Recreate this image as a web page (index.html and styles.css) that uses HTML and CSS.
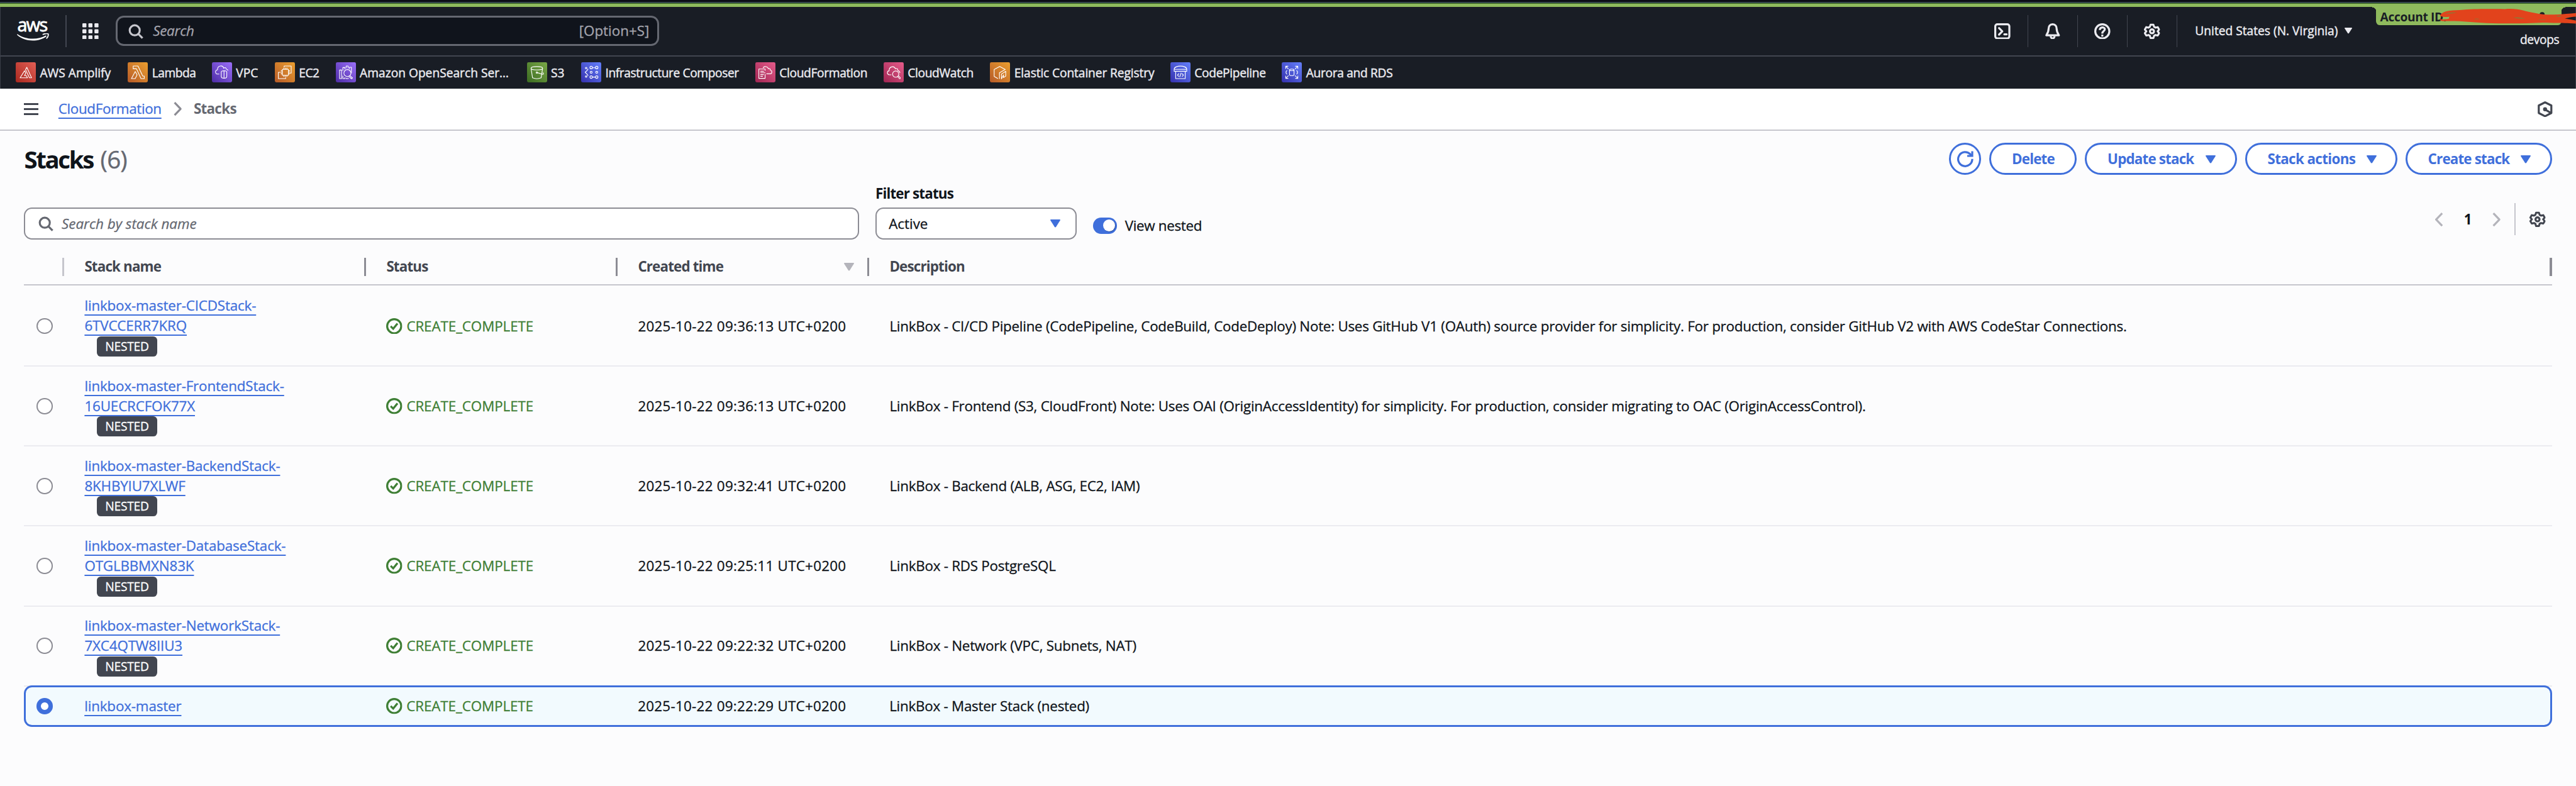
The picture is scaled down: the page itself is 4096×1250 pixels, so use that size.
FILE: index.html
```
<!DOCTYPE html>
<html lang="en">
<head>
<meta charset="utf-8">
<title>CloudFormation - Stacks</title>
<link rel="stylesheet" href="styles.css">
</head>
<body>
<svg class="defs" aria-hidden="true">
  <defs>
    <symbol id="i-search" viewBox="0 0 32 32"><circle cx="14" cy="14" r="10" fill="none" stroke="currentColor" stroke-width="4"/><path d="M21 21l8.500 8.500" fill="none" stroke="currentColor" stroke-width="4"/></symbol>
    <symbol id="i-caret" viewBox="0 0 20 16"><path d="M1.200 0H18.800Q20.500 0.300 19.600 2L11.300 15Q10 16.800 8.700 15L.4 2Q-.5 .3 1.200 0Z" fill="currentColor"/></symbol>
    <symbol id="i-gear" viewBox="0 0 32 32"><path d="M13 2h6l1.400 4.600 3 1.700 4.600-1.100 3 5-3.200 3.800 3.200 3.800-3 5-4.600-1.100-3 1.700L19 30h-6l-1.400-4.600-3-1.700L4 24.800l-3-5L4.200 16 1 12.200l3-5 4.600 1.100 3-1.700z" transform="translate(.8 .8) scale(.95)" fill="none" stroke="currentColor" stroke-width="4" stroke-linejoin="round"/><circle cx="16" cy="16" r="4" fill="none" stroke="currentColor" stroke-width="4"/></symbol>
    <symbol id="i-check" viewBox="0 0 32 32"><circle cx="16" cy="16" r="14" fill="none" stroke="currentColor" stroke-width="4"/><path d="M9 16l5 5 8.500-10.500" fill="none" stroke="currentColor" stroke-width="4"/></symbol>
    <symbol id="i-chevron" viewBox="0 0 16 28"><path d="M2 1.500L14 14 2 26.500" fill="none" stroke="currentColor" stroke-width="4" stroke-linejoin="round"/></symbol>
  </defs>
</svg>

<div class="account-stripe"></div>
<header class="topnav">
  <a class="aws">
    <span class="aws-word">aws</span>
    <svg class="aws-smile" viewBox="0 0 64 15"><path d="M1 1.500C16 13 42 13.500 57 4.500Q59.500 4.500 58 6.500C42 18 15 17 .5 3.500Q-.3 1.500 1 1.500Z" fill="#fff"/><path d="M51 2.500Q58 -.8 62 1.200Q63.500 5 58.500 10.500" fill="none" stroke="#fff" stroke-width="2.200"/></svg>
  </a>
  <span class="nav-divider"></span>
  <svg class="apps" viewBox="0 0 32 32" fill="#ebebf0"><rect width="8" height="8" rx="1.500"/><rect x="12" width="8" height="8" rx="1.500"/><rect x="24" width="8" height="8" rx="1.500"/><rect y="12" width="8" height="8" rx="1.500"/><rect x="12" y="12" width="8" height="8" rx="1.500"/><rect x="24" y="12" width="8" height="8" rx="1.500"/><rect y="24" width="8" height="8" rx="1.500"/><rect x="12" y="24" width="8" height="8" rx="1.500"/><rect x="24" y="24" width="8" height="8" rx="1.500"/></svg>
  <div class="nav-search"><svg class="icon"><use href="#i-search"/></svg><span class="nav-search-text">Search</span><span class="nav-search-key">[Option+S]</span></div>
  <div class="nav-tools">
    <span class="tool"><svg class="icon" viewBox="0 0 32 32" fill="none" stroke="currentColor" stroke-width="4"><rect x="2" y="2" width="28" height="28" rx="4"/><path d="M9.500 9.500L16 16l-6.500 6.500" stroke-linejoin="round" stroke-linecap="round"/><path d="M20 22h4.500" stroke-linecap="round"/></svg></span>
    <span class="tool"><svg class="icon" viewBox="0 0 32 32" fill="none" stroke="currentColor" stroke-width="4" stroke-linejoin="round"><path d="M16 2C10.500 2 8 6 8 11C8 17 6 20 3.500 24H28.500C26 20 24 17 24 11C24 6 21.500 2 16 2Z"/><path d="M12 25.500Q12.500 30 16 30T20 25.500"/></svg></span>
    <span class="tool"><svg class="icon" viewBox="0 0 32 32" fill="none" stroke="currentColor" stroke-width="4"><circle cx="16" cy="16" r="14"/><path d="M11 13.500C11 6.500 21 6.800 21 12C21 15.500 16 15.500 16 20.500"/><path d="M16 22.500v4"/></svg></span>
    <span class="tool"><svg class="icon"><use href="#i-gear"/></svg></span>
  </div>
  <span class="region">United States (N. Virginia)<svg class="region-caret" viewBox="0 0 20 16"><use href="#i-caret"/></svg></span>
  <div class="account"><span class="account-tab">Account ID:</span><span class="account-user">devops</span></div>
  <svg class="scribble" viewBox="0 0 272 37">
    <g fill="#191d25"><path d="M105 9h9v6h-9zM124 9h8v3h-8zM136 9h9v6h-9zM176 11h10v6h-10zM90 22h20v3H90z"/><circle cx="204" cy="14" r="5"/></g>
    <path d="M1 16C6 6 20 6 40 5C75 2 100 3 130 3C160 1 168 8 190 11C215 17 245 13 272 11V18C264 18 256 20 249 22Q262 24 272 26V32C240 30 225 31 205 30C170 32 130 32 95 31C60 29 45 26 5 27Q-1 26 2 23Q15 24 19 22Q18 18 21 18Q4 20 1 16Z" fill="#e2431c"/>
    <path d="M10 12q12-3 25-2q-12 3-25 2zM68 23q6-2 12 0zM146 20q12-2 24 2q-14 1-24-2zM197 24h14v1h-14zM231 17q8-2 13 0q-8 2-13 0z" fill="#8a7a35"/>
  </svg>
</header>

<nav class="favorites">
  <a class="fav fav-amplify"><svg class="fav-icon red" viewBox="0 0 40 40"><path d="M22 10L31.500 31H27.300L19.500 14.800ZM8.700 31L17.500 17 20 21.500 17.500 26.500H21L23.500 31Z"/></svg><span>AWS Amplify</span></a>
  <a class="fav fav-lambda"><svg class="fav-icon orange" viewBox="0 0 40 40"><path d="M11 7.500h9.500L30 27.500h3v5h-6.500L17.500 13h-6.500ZM7.500 32.500L15 18.500l3.700 6.500-3.700 7.500Z"/></svg><span>Lambda</span></a>
  <a class="fav fav-vpc"><svg class="fav-icon purple" viewBox="0 0 40 40"><path d="M14.500 23.500H12C6 23.500 5.500 16 11 15C11 6 21.500 5 23.500 12Q27 8.500 28.500 13.500Q31 14 32 16.500M18.500 19.500C18.500 16 29.500 16 29.500 19.500V28C29.500 33 18.500 33 18.500 28ZM24 17.500V31.500"/></svg><span>VPC</span></a>
  <a class="fav fav-ec2"><svg class="fav-icon orange" viewBox="0 0 40 40"><path d="M15 14h12v12H15zM18 11v3M21 11v3M24 11v3M18 26v3M21 26v3M24 26v3M12 17h3M12 20h3M12 23h3M27 17h3M27 20h3M27 23h3M18.500 10V7.500h14v14H30M11.500 20H7v12.500h14.500V30"/></svg><span>EC2</span></a>
  <a class="fav fav-opensearch"><svg class="fav-icon purple" viewBox="0 0 40 40"><path d="M7.500 15.500h4v17h-4zM14 17v-6.500h4V14M20.500 12V7.500h4V12M27 13v-3h4v12M14 27v5.500h4V30M20.500 31v1.500h4V31M29 31v1.500"/><circle cx="23" cy="21.500" r="7"/><path d="M27.500 26.500l5.500 4.500-1.500 2-6-5"/></svg><span>Amazon OpenSearch Ser…</span></a>
  <a class="fav fav-s3"><svg class="fav-icon green" viewBox="0 0 40 40"><path d="M8 12C8 7.500 31 7.500 31 12S8 16.500 8 12L11 31Q19.500 34.500 28 31L31 12M20 20.500L31 24q3-.5 .5-3.500"/><circle cx="19.500" cy="20.500" r="1.300"/></svg><span>S3</span></a>
  <a class="fav fav-composer"><svg class="fav-icon blue" viewBox="0 0 40 40"><circle cx="10" cy="11.500" r="1.500"/><circle cx="20" cy="10.500" r="2.500"/><circle cx="31" cy="10.500" r="2.500"/><circle cx="20" cy="20" r="2"/><circle cx="31" cy="20" r="2"/><circle cx="20" cy="29.500" r="2.500"/><circle cx="31" cy="29.500" r="2.500"/><circle cx="10" cy="28.500" r="1.500"/><path d="M22.500 11l6 0M22.500 29.500h6M14 13q-2 4-6 7q4 3 6 7"/></svg><span>Infrastructure Composer</span></a>
  <a class="fav fav-cfn"><svg class="fav-icon pink" viewBox="0 0 40 40"><path d="M19.500 17V13.500H7V32h12.500V23.500M10 18h7M10 21h10M10 24.500h7M10 28h5M15.500 11.500C17 7 25 8 26 13Q29.500 11 30 16C34.500 17 33 23 30 23H22"/></svg><span>CloudFormation</span></a>
  <a class="fav fav-cw"><svg class="fav-icon pink" viewBox="0 0 40 40"><path d="M15.500 25H11.500C6 24 6.500 17.500 11 17C10.500 8 21 6.500 23.500 13Q28 11 28.500 16.500Q32 17.500 32.500 21"/><circle cx="24" cy="23.500" r="6.200"/><path d="M28 28.500l3.500 4q2 .5 1.500-2l-4-4"/></svg><span>CloudWatch</span></a>
  <a class="fav fav-ecr"><svg class="fav-icon orange" viewBox="0 0 40 40"><path d="M16 32.500L8.500 28V14.500L19.500 8.500L30.500 14.500L19 21V33M23 33V23.500L31.500 18V27.500L27 30.500V25Z"/></svg><span>Elastic Container Registry</span></a>
  <a class="fav fav-pipeline"><svg class="fav-icon blue" viewBox="0 0 40 40"><path d="M7.500 14C7.500 5.500 32.500 5.500 32.500 14ZM7.500 14v4h25v-4M10.500 18v14.500h19V18M17 22.500l-3 3 3 3M23 22.500l3 3-3 3M21.500 21l-3 8.500"/></svg><span>CodePipeline</span></a>
  <a class="fav fav-rds"><svg class="fav-icon blue" viewBox="0 0 40 40"><path d="M8 13V8h5M8 8l5.500 5.500M32 13V8h-5M32 8l-5.500 5.500M8 27v5h5M8 32l5.500-5.500M32 27v5h-5M32 32l-5.500-5.500M15.500 15C15.500 13 24.500 13 24.500 15V25C24.500 27 15.500 27 15.500 25ZM15.500 15C15.500 17 24.500 17 24.500 15M10.500 16q-4 4 0 8M29.500 16q4 4 0 8"/></svg><span>Aurora and RDS</span></a>
</nav>

<div class="crumbs">
  <span class="burger"><i></i><i></i><i></i></span>
  <a class="link">CloudFormation</a>
  <svg class="crumb-sep" viewBox="0 0 16 28"><use href="#i-chevron"/></svg>
  <span class="crumb-current">Stacks</span>
  <svg class="panel-toggle" viewBox="0 0 32 32" fill="none" stroke="currentColor" stroke-width="4" stroke-linejoin="round"><path d="M16 2.200L28.500 8.500V23.500L16 29.800L3.500 23.500V8.500Z"/><circle cx="16" cy="16" r="2.500" fill="currentColor" stroke-width="3"/><path d="M17 17l10 6"/></svg>
</div>

<main class="content">
  <div class="heading">
    <h1>Stacks <span class="count">(6)</span></h1>
    <div class="actions">
      <button class="btn btn-refresh"><svg class="refresh" viewBox="0 0 32 32" fill="none" stroke="currentColor" stroke-width="4"><path d="M30 16A14 14 0 1 1 26 6.500L29 10"/><path d="M30 .5V10H20"/></svg></button>
      <button class="btn btn-delete">Delete</button>
      <button class="btn btn-update">Update stack<svg class="caret" viewBox="0 0 20 16"><use href="#i-caret"/></svg></button>
      <button class="btn btn-actions">Stack actions<svg class="caret" viewBox="0 0 20 16"><use href="#i-caret"/></svg></button>
      <button class="btn btn-create">Create stack<svg class="caret" viewBox="0 0 20 16"><use href="#i-caret"/></svg></button>
    </div>
  </div>

  <div class="filters">
    <div class="filter-input"><svg class="icon"><use href="#i-search"/></svg><span>Search by stack name</span></div>
    <div class="filter-status">
      <label>Filter status</label>
      <div class="select">Active<svg class="caret" viewBox="0 0 20 16"><use href="#i-caret"/></svg></div>
    </div>
    <div class="nested"><span class="toggle"><i></i></span>View nested</div>
    <div class="pager">
      <svg class="chev chev-prev" viewBox="0 0 16 28"><use href="#i-chevron"/></svg>
      <b>1</b>
      <svg class="chev" viewBox="0 0 16 28"><use href="#i-chevron"/></svg>
      <span class="pager-divider"></span>
      <svg class="icon"><use href="#i-gear"/></svg>
    </div>
  </div>

  <div class="table">
    <div class="row head">
      <span class="th th-select"></span><span class="th">Stack name</span><span class="th">Status</span><span class="th">Created time<svg class="caret sort" viewBox="0 0 20 16"><use href="#i-caret"/></svg></span><span class="th th-last">Description</span>
    </div>
    <div class="row first">
      <span class="radio"></span>
      <div class="name"><a class="link">linkbox-master-CICDStack-<br>6TVCCERR7KRQ</a><span class="badge">NESTED</span></div>
      <span class="status"><svg class="icon"><use href="#i-check"/></svg>CREATE_COMPLETE</span>
      <span class="time">2025-10-22 09:36:13 UTC+0200</span>
      <span class="desc">LinkBox - CI/CD Pipeline (CodePipeline, CodeBuild, CodeDeploy) Note: Uses GitHub V1 (OAuth) source provider for simplicity. For production, consider GitHub V2 with AWS CodeStar Connections.</span>
    </div>
    <div class="row">
      <span class="radio"></span>
      <div class="name"><a class="link">linkbox-master-FrontendStack-<br>16UECRCFOK77X</a><span class="badge">NESTED</span></div>
      <span class="status"><svg class="icon"><use href="#i-check"/></svg>CREATE_COMPLETE</span>
      <span class="time">2025-10-22 09:36:13 UTC+0200</span>
      <span class="desc">LinkBox - Frontend (S3, CloudFront) Note: Uses OAI (OriginAccessIdentity) for simplicity. For production, consider migrating to OAC (OriginAccessControl).</span>
    </div>
    <div class="row">
      <span class="radio"></span>
      <div class="name"><a class="link">linkbox-master-BackendStack-<br>8KHBYIU7XLWF</a><span class="badge">NESTED</span></div>
      <span class="status"><svg class="icon"><use href="#i-check"/></svg>CREATE_COMPLETE</span>
      <span class="time">2025-10-22 09:32:41 UTC+0200</span>
      <span class="desc">LinkBox - Backend (ALB, ASG, EC2, IAM)</span>
    </div>
    <div class="row">
      <span class="radio"></span>
      <div class="name"><a class="link">linkbox-master-DatabaseStack-<br>OTGLBBMXN83K</a><span class="badge">NESTED</span></div>
      <span class="status"><svg class="icon"><use href="#i-check"/></svg>CREATE_COMPLETE</span>
      <span class="time">2025-10-22 09:25:11 UTC+0200</span>
      <span class="desc">LinkBox - RDS PostgreSQL</span>
    </div>
    <div class="row">
      <span class="radio"></span>
      <div class="name"><a class="link">linkbox-master-NetworkStack-<br>7XC4QTW8IIU3</a><span class="badge">NESTED</span></div>
      <span class="status"><svg class="icon"><use href="#i-check"/></svg>CREATE_COMPLETE</span>
      <span class="time">2025-10-22 09:22:32 UTC+0200</span>
      <span class="desc">LinkBox - Network (VPC, Subnets, NAT)</span>
    </div>
    <div class="row selected">
      <span class="radio checked"></span>
      <div class="name"><a class="link">linkbox-master</a></div>
      <span class="status"><svg class="icon"><use href="#i-check"/></svg>CREATE_COMPLETE</span>
      <span class="time">2025-10-22 09:22:29 UTC+0200</span>
      <span class="desc">LinkBox - Master Stack (nested)</span>
    </div>
  </div>
</main>
</body>
</html>
```
FILE: styles.css
```
/* 1rem = 8px; all sizes are in rem so the console scales as one piece */
html { font-size: 8px; }
* { box-sizing: border-box; }
body {
  margin: 0;
  height: 1250px;
  overflow: hidden;
  background: #fcfcfd;
  color: #0f141a;
  font: 400 2.8rem/4rem "Open Sans", "Noto Sans", sans-serif;
  white-space: nowrap;
  -webkit-text-stroke: .3px;
}
.defs { position: absolute; width: 0; height: 0; }
.icon { width: 3.2rem; height: 3.2rem; flex: none; display: block; }
.caret { width: 2rem; height: 1.6rem; flex: none; display: block; }

/* stripe in the account colour */
.account-stripe {
  height: 1.4rem;
  background: linear-gradient(#0c0d17 0 .4rem, #35474a .4rem .6rem, #3b6b1f .6rem .8rem, #8fba5d .8rem);
}

/* top navigation */
.topnav {
  position: relative;
  display: flex;
  align-items: center;
  height: 9.8rem;
  padding: 0 2.8rem 0 3.3rem;
  background: #191d25;
  border-bottom: .25rem solid #424650;
  border-left: .2rem solid #3a3e47;
  border-right: .2rem solid #3a3e47;
  color: #ebebf0;
  font-size: 2.4rem;
}
.aws { display: flex; flex-direction: column; width: 6.4rem; height: 4rem; margin-left: -.1rem; }
.aws-word { font-size: 3.6rem; line-height: 2.6rem; height: 2.4rem; margin-top: -.6rem; letter-spacing: -.2rem; color: #fff; padding-left: .1rem; -webkit-text-stroke: .8px; }
.aws-smile { width: 6.4rem; height: 1.5rem; margin-top: .7rem; }
.nav-divider { width: .2rem; height: 6.4rem; margin-left: 3.3rem; background: #424650; }
.apps { width: 3.2rem; height: 3.2rem; margin-left: 3.2rem; }
.nav-search {
  display: flex;
  align-items: center;
  width: 108rem;
  height: 6rem;
  margin-left: 3.4rem;
  padding: 0 1.6rem 0 2rem;
  background: #10141c;
  border: .4rem solid #656871;
  border-radius: 1.6rem;
  font-size: 2.8rem;
  color: #a4a4ad;
}
.nav-search .icon { color: #c6c6cd; }
.nav-search-text { margin-left: 1.8rem; font-style: italic; letter-spacing: -.01em; }
.nav-search-key { margin-left: auto; }
.nav-tools { display: flex; margin-left: auto; }
.tool { display: flex; align-items: center; justify-content: center; width: 9.9rem; height: 6.4rem; border-right: .2rem solid #424650; }
.tool:first-child { width: 10rem; }
.region { display: flex; align-items: center; margin-left: 3.5rem; -webkit-text-stroke: .45px; }
.region-caret { width: 1.5rem; height: 1.2rem; margin: 0 0 .1rem 1.3rem; }
.account { align-self: flex-start; display: flex; flex-direction: column; align-items: flex-end; margin-left: 4.8rem; }
.account-tab {
  position: relative;
  width: 36.800rem;
  height: 3.6rem;
  padding-left: .8rem;
  line-height: 3.9rem;
  font-weight: 700;
  -webkit-text-stroke: 0;
  letter-spacing: -.02em;
  color: #191d25;
  background: #8fba5d;
  border-radius: 0 0 .8rem .8rem;
}
.account-tab::before, .account-tab::after {
  content: "";
  position: absolute;
  top: 0;
  width: .8rem;
  height: .8rem;
}
.account-tab::before { left: -.8rem; background: radial-gradient(circle at 0 100%, transparent .78rem, #8fba5d .8rem); }
.account-tab::after { right: -.8rem; background: radial-gradient(circle at 100% 100%, transparent .78rem, #8fba5d .8rem); }
.account-user { margin: 1.100rem .4rem 0 0; line-height: 3.6rem; letter-spacing: -.018em; -webkit-text-stroke: .45px; }
.scribble { position: absolute; right: -.2rem; top: .1rem; width: 27.2rem; height: 3.7rem; overflow: visible; }

/* favourites bar */
.favorites {
  display: flex;
  align-items: center;
  gap: 3.2rem;
  height: 6.4rem;
  padding-left: 3rem;
  background: #191d25;
  border-left: .2rem solid #3a3e47;
  border-right: .2rem solid #3a3e47;
  color: #ebebf0;
  font-size: 2.4rem;
  -webkit-text-stroke: .45px;
}
.fav { display: flex; align-items: center; gap: .8rem; }
.fav-icon { width: 4rem; height: 4rem; border-radius: .3rem; fill: none; stroke: #fff; stroke-width: 1.400; stroke-linejoin: round; }
.fav span { padding-top: .1rem; }
.red { background: linear-gradient(45deg, #a9281f, #e35f55); }
.orange { background: linear-gradient(45deg, #b65a28, #eb9f2f); }
.purple { background: linear-gradient(45deg, #4d2ca5, #9b6ffa); }
.green { background: linear-gradient(45deg, #3b6b22, #7aa847); }
.blue { background: linear-gradient(45deg, #3530ad, #6480fb); }
.pink { background: linear-gradient(45deg, #9f2552, #e65c8b); }
.fav-amplify span { width: 14.300rem; }
.fav-lambda span { width: 8.700rem; letter-spacing: -.026em; }
.fav-vpc span { width: 4.500rem; }
.fav-ec2 span { width: 4.100rem; letter-spacing: -.025em; }
.fav-opensearch span { width: 30rem; }
.fav-s3 span { width: 2.800rem; }
.fav-composer span { width: 26.600rem; letter-spacing: -.021em; }
.fav-cfn span { width: 17.500rem; letter-spacing: -.018em; }
.fav-cw span { width: 13.200rem; letter-spacing: -.018em; }
.fav-ecr span { width: 27.800rem; letter-spacing: -.006em; }
.fav-pipeline span { width: 14.200rem; letter-spacing: -.016em; }
.fav-rds span { letter-spacing: -.017em; }

.link {
  color: #3f6fdb;
  letter-spacing: -.007em;
  text-decoration: underline;
  text-decoration-thickness: .2rem;
  text-underline-offset: .7rem;
  text-decoration-skip-ink: none;
}

/* breadcrumb */
.crumbs {
  display: flex;
  align-items: center;
  height: 8.4rem;
  padding: 0 4.6rem 0 4.800rem;
  background: #fff;
  border-bottom: .25rem solid #c6c6cd;
  color: #424650;
}
.burger { display: flex; flex-direction: column; gap: .6rem; width: 2.8rem; margin-right: 4rem; }
.burger i { height: .4rem; background: #424650; }
.crumbs .link { letter-spacing: -.0157em; }
.crumb-sep { width: 1.6rem; height: 2.8rem; margin: 0 2.4rem; color: #8c8c94; }
.crumb-current { font-weight: 700; -webkit-text-stroke: 0; letter-spacing: -.031em; color: #656871; }
.panel-toggle { width: 3.2rem; height: 3.2rem; margin-left: auto; }

/* page */
.content { padding: 2.4rem 4.8rem 0; }
.heading { display: flex; justify-content: space-between; align-items: center; height: 6.4rem; }
h1 { margin: 0; font-size: 4.8rem; line-height: 6rem; letter-spacing: -.061em; font-weight: 700; -webkit-text-stroke: 0; }
.count { font-weight: 400; letter-spacing: -.02em; color: #656871; margin-left: .5rem; -webkit-text-stroke: .4px; }
.actions { display: flex; gap: 1.6rem; }
.btn {
  display: flex;
  align-items: center;
  height: 6.4rem;
  padding: .1rem 0 0 4.100rem;
  background: #fff;
  border: .4rem solid #3f6fdb;
  border-radius: 3.2rem;
  color: #3f6fdb;
  font: 700 2.8rem/4rem "Open Sans", "Noto Sans", sans-serif;
  -webkit-text-stroke: 0;
  letter-spacing: -.037em;
  white-space: nowrap;
}
.btn .caret { margin-left: auto; margin-right: 3.8rem; }
.btn-refresh { width: 6.4rem; padding: 0 1.2rem; }
.refresh { width: 3.2rem; height: 3.2rem; display: block; flex: none; overflow: visible; }
.btn-delete { width: 17.400rem; }
.btn-update { width: 30.200rem; }
.btn-actions { width: 30.300rem; letter-spacing: -.028em; }
.btn-create { width: 29.100rem; }

.filters { display: flex; align-items: flex-end; height: 12.8rem; }
.filter-input {
  display: flex;
  align-items: center;
  gap: 1.6rem;
  width: 166rem;
  height: 6.4rem;
  padding: .1rem 0 0 2.400rem;
  background: #fff;
  border: .25rem solid #8c8c94;
  border-radius: 1.6rem;
  color: #656871;
  font-style: italic;
}
.filter-status { width: 40rem; margin-left: 3.2rem; }
.filter-status label { display: block; height: 4.8rem; padding-top: .1rem; font-weight: 700; -webkit-text-stroke: 0; letter-spacing: -.037em; }
.select {
  display: flex;
  align-items: center;
  justify-content: space-between;
  height: 6.4rem;
  padding: .1rem 3rem 0 2.400rem;
  background: #fff;
  border: .25rem solid #8c8c94;
  border-radius: 1.6rem;
}
.select .caret { color: #3f6fdb; }
.nested { display: flex; align-items: center; gap: 1.6rem; margin-left: 3.2rem; height: 5.5rem; letter-spacing: -.0146em; }
.toggle { display: flex; justify-content: flex-end; align-items: center; width: 4.800rem; height: 3.2rem; padding-right: .4rem; border-radius: 1.6rem; background: #3f6fdb; }
.toggle i { width: 2.4rem; height: 2.4rem; border-radius: 50%; background: #fff; box-shadow: .1rem .1rem .1rem #2b4f9f; }
.pager { display: flex; align-items: center; height: 8rem; margin-left: auto; padding-right: 1.200rem; color: #424650; }
.pager b { width: 1.600rem; margin: 0 4.100rem; color: #0f141a; text-align: center; -webkit-text-stroke: 0; }
.chev { width: 1.6rem; height: 2.8rem; color: #b4b4bb; }
.chev-prev { transform: scaleX(-1); }
.pager-divider { width: .2rem; height: 6.4rem; margin: 0 2.800rem; background: #c6c6cd; }

/* stacks table */
.table { margin-top: 2.2rem; }
.row {
  display: grid;
  grid-template-columns: 12rem 60rem 50rem 50rem 1fr;
  align-items: center;
  height: 15.9rem;
  border-bottom: .25rem solid #ebebf0;
}
.row.first { height: 16.100rem; padding-top: .2rem; }
.head { height: 7rem; border-color: #c6c6cd; color: #424650; font-weight: 700; -webkit-text-stroke: 0; letter-spacing: -.038em; }
.th { position: relative; display: flex; align-items: center; height: 4rem; margin-top: -.3rem; }
.th::after { content: ""; position: absolute; right: 4rem; top: .2rem; width: .4rem; height: 3.6rem; background: #8c8c94; }
.th-select::after { background: #c6c6cd; }
.th-last::after { right: 0; }
.sort { margin-left: auto; margin-right: 7rem; color: #b4b4bb; }
.radio { width: 3.2rem; height: 3.2rem; margin-left: 2.500rem; border: .25rem solid #8c8c94; border-radius: 50%; background: #fff; }
.radio.checked { border: .9rem solid #3f6fdb; }
.name { align-self: start; padding-top: 1.800rem; }
.badge {
  display: block;
  width: 12.1rem;
  height: 4rem;
  margin: .1rem 0 0 2.4rem;
  border-radius: .8rem;
  background: #424650;
  color: #fff;
  font-size: 2.4rem;
  letter-spacing: -.01em;
  text-align: center;
}
.status { display: flex; align-items: center; gap: .8rem; color: #3f7f35; letter-spacing: -.004em; }
.time { letter-spacing: .0115em; }
.desc { letter-spacing: -.0112em; }
.row.selected {
  height: 8.200rem;
  margin-top: -.2rem;
  border: .4rem solid #3f6fdb;
  border-radius: 1.6rem;
  background: #f2fafe;
  grid-template-columns: 11.6rem 60rem 50rem 50rem 1fr;
}
.selected .radio { margin-left: 2.1rem; }
.selected .name { align-self: center; padding: 0; }
```
